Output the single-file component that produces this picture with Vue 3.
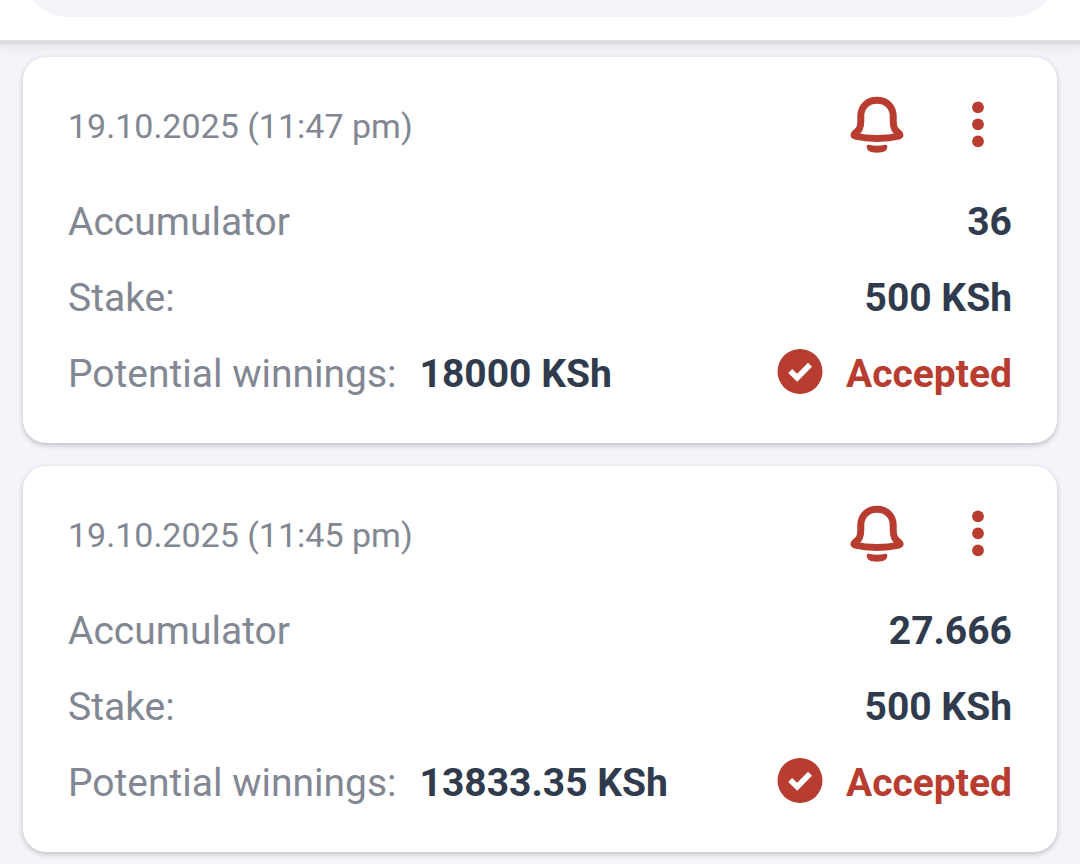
<script setup>
const bets = [
  { id: 1, date: '19.10.2025 (11:47 pm)', odds: '36', stake: '500 KSh', winnings: '18000 KSh', status: 'Accepted' },
  { id: 2, date: '19.10.2025 (11:45 pm)', odds: '27.666', stake: '500 KSh', winnings: '13833.35 KSh', status: 'Accepted' },
]
</script>

<template>
  <div class="page">
    <header class="topbar">
      <div class="panel"></div>
    </header>
    <main class="list">
      <article v-for="bet in bets" :key="bet.id" class="card">
        <div class="head">
          <time class="date">{{ bet.date }}</time>
          <div class="actions">
            <button type="button" class="icon-btn" aria-label="Notifications">
              <svg viewBox="0 0 66 66" aria-hidden="true">
                <path
                  d="M33 7.2C23.5 7.2 16.8 13.8 16.8 23V28C16.8 35.5 14.8 37.6 10.8 40.6C9.4 41.8 9.8 42.8 11.2 43.1C18 44.7 25 45.4 33 45.4S48 44.7 54.8 43.1C56.2 42.8 56.6 41.8 55.2 40.6C51.2 37.6 49.2 35.5 49.2 28V23C49.2 13.8 42.5 7.2 33 7.2Z"
                  fill="none" stroke="currentColor" stroke-width="7" stroke-linejoin="round" />
                <path
                  d="M24.6 51.8C30 53 36 53 41.4 51.8C42.8 51.6 43.4 52.4 43.3 53.8C43 58 39.5 59.7 33 59.7S23 58 22.7 53.8C22.6 52.4 23.2 51.6 24.6 51.8Z"
                  fill="currentColor" />
              </svg>
            </button>
            <button type="button" class="icon-btn" aria-label="More options">
              <svg viewBox="0 0 66 66" aria-hidden="true" fill="currentColor">
                <circle cx="33" cy="14.3" r="5.9" />
                <circle cx="33" cy="31.3" r="5.9" />
                <circle cx="33" cy="48.3" r="5.9" />
              </svg>
            </button>
          </div>
        </div>
        <div class="row">
          <span class="label">Accumulator</span>
          <span class="value">{{ bet.odds }}</span>
        </div>
        <div class="row">
          <span class="label">Stake:</span>
          <span class="value">{{ bet.stake }}</span>
        </div>
        <div class="row">
          <div class="pair">
            <span class="label">Potential winnings:</span>
            <span class="value">{{ bet.winnings }}</span>
          </div>
          <div class="status">
            <svg class="tick" viewBox="0 0 46 50" aria-hidden="true">
              <circle cx="23" cy="22.5" r="22.5" fill="currentColor" />
              <path d="M13.2 22L20.2 28.8L33 15.8" fill="none" stroke="#fff" stroke-width="5.6" />
            </svg>
            <span>{{ bet.status }}</span>
          </div>
        </div>
      </article>
    </main>
  </div>
</template>

<style>
body {
  margin: 0;
  background: #f3f5fa;
}
</style>

<style scoped>
.page {
  font-family: Roboto, "Liberation Sans", sans-serif;
  font-size: 39px;
  color: #303b4d;
  overflow: hidden;
}

.topbar {
  position: relative;
  background: #fff;
  padding: 0 23px 23px;
  box-shadow: 0 4px 1px #dcdde2, 0 5px 12px rgba(40, 44, 60, 0.12);
}

.panel {
  height: 90px;
  margin-top: -73px;
  border-radius: 45px;
  background: #f3f5fa;
}

.list {
  display: flex;
  flex-direction: column;
  gap: 23px;
  padding: 17px 23px 12px;
}

.card {
  padding: 30px 45px 31px;
  border-radius: 23px;
  background: #fff;
  box-shadow: 0 2px 5px rgba(0, 0, 0, 0.2), 0 2px 12px rgba(0, 0, 0, 0.04);
}

.head,
.row,
.pair,
.status,
.actions {
  display: flex;
  align-items: center;
}

.head,
.row {
  justify-content: space-between;
}

.head {
  height: 78px;
  margin-bottom: 19px;
}

.row {
  line-height: 76px;
}

.date {
  font-size: 34px;
  color: #828793;
}

.actions {
  gap: 33px;
}

.icon-btn {
  width: 68px;
  height: 68px;
  padding: 1px;
  border: 0;
  background: none;
  color: #b93c30;
  cursor: pointer;
}

.icon-btn svg {
  display: block;
  width: 100%;
}

.label {
  color: #828793;
}

.value,
.status {
  font-weight: 700;
}

.pair {
  gap: 23px;
}

.status {
  gap: 23px;
  color: #b93c30;
}

.tick {
  width: 46px;
  height: 50px;
}
</style>
